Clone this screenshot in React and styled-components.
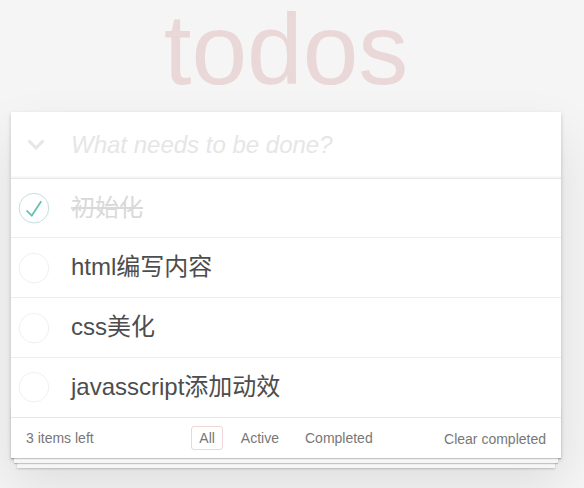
import React from "react";
import styled, { createGlobalStyle } from "styled-components";

const GlobalStyle = createGlobalStyle`
  body {
    margin: 0;
    background: #f5f5f5;
    font-family: "Liberation Sans", "Noto Sans CJK SC", Arial, sans-serif;
    color: #4d4d4d;
  }
`;

const Page = styled.div`
  width: 550px;
  margin: 0 0 0 11px;
  padding-bottom: 40px;
`;

const Title = styled.h1`
  margin: 0;
  height: 112px;
  font-size: 100px;
  line-height: 99px;
  font-weight: 100;
  text-align: center;
  color: rgba(175, 47, 47, 0.15);
`;

const Card = styled.section`
  position: relative;
  background: #fff;
  box-shadow: 0 2px 4px 0 rgba(0, 0, 0, 0.2), 0 25px 50px 0 rgba(0, 0, 0, 0.1);
`;

const Header = styled.header`
  display: flex;
  align-items: center;
  height: 65.6px;
  box-shadow: inset 0 -2px 1px rgba(0, 0, 0, 0.03);
`;

const ToggleAll = styled.button`
  width: 60px;
  height: 100%;
  padding: 0 0 0 16px;
  border: 0;
  background: none;
  display: flex;
  align-items: center;
  cursor: pointer;
`;

const NewTodo = styled.input`
  flex: 1;
  min-width: 0;
  box-sizing: border-box;
  height: 100%;
  padding: 0 16px 0 0;
  border: 0;
  outline: none;
  background: transparent;
  font-family: inherit;
  font-size: 24px;
  color: #4d4d4d;

  &::placeholder {
    font-style: italic;
    font-weight: 300;
    color: #e6e6e6;
  }
`;

const List = styled.ul`
  margin: 0;
  padding: 0;
  list-style: none;
  border-top: 1px solid #e6e6e6;
`;

const Item = styled.li`
  display: flex;
  align-items: center;
  border-bottom: 1px solid #ededed;

  &:last-child {
    border-bottom: none;
  }
`;

const Check = styled.span`
  width: 60px;
  height: 40px;
  display: flex;
  align-items: center;
`;

const Label = styled.label`
  flex: 1;
  padding: 15px 60px 15px 0;
  font-size: 24px;
  line-height: 1.2;
  word-break: break-all;
  color: ${(p) => (p.$done ? "#d9d9d9" : "#4d4d4d")};
  text-decoration: ${(p) => (p.$done ? "line-through" : "none")};
`;

const Footer = styled.footer`
  position: relative;
  display: grid;
  grid-template-columns: 1fr auto 1fr;
  grid-template-rows: 20px;
  align-items: center;
  height: 20px;
  padding: 10px 15px;
  border-top: 1px solid #e6e6e6;
  color: #777;
  font-size: 14px;

  &::before {
    content: "";
    position: absolute;
    left: 0;
    right: 0;
    bottom: 0;
    height: 50px;
    pointer-events: none;
    box-shadow: 0 1px 1px rgba(0, 0, 0, 0.2), 0 8px 0 -3px #f6f6f6,
      0 9px 1px -3px rgba(0, 0, 0, 0.2), 0 16px 0 -6px #f6f6f6,
      0 17px 2px -6px rgba(0, 0, 0, 0.2);
  }
`;

const Count = styled.span`
  line-height: 20px;
`;

const Filters = styled.ul`
  display: flex;
  align-items: center;
  gap: 4px;
  height: 20px;
  margin: 0;
  padding: 0;
  list-style: none;

  li {
    display: flex;
    align-items: center;
    height: 20px;
  }
`;

const FilterLink = styled.a`
  display: block;
  flex-shrink: 0;
  margin: 0 3px;
  padding: 3px 7px;
  line-height: 16px;
  color: inherit;
  text-decoration: none;
  border: 1px solid
    ${(p) => (p.$selected ? "rgba(175, 47, 47, 0.2)" : "transparent")};
  border-radius: 3px;
`;

const ClearButton = styled.button`
  justify-self: end;
  position: relative;
  top: 1px;
  padding: 0;
  border: 0;
  background: none;
  font: inherit;
  line-height: 20px;
  color: inherit;
  cursor: pointer;
`;

const Chevron = () => (
  <svg width="18" height="11" viewBox="0 0 18 11">
    <polyline
      points="1.5,1.5 9,9 16.5,1.5"
      fill="none"
      stroke="#e6e6e6"
      strokeWidth="3"
    />
  </svg>
);

const Toggle = ({ done }) => (
  <svg width="40" height="40" viewBox="-10 -18 100 135">
    <circle
      cx="50"
      cy="50"
      r="50"
      fill="none"
      stroke={done ? "#bddad5" : "#ededed"}
      strokeWidth="3"
    />
    {done && <path fill="#5dc2af" d="M72 25L42 71 27 56l-4 4 20 20 34-52z" />}
  </svg>
);

const todos = [
  { id: 1, title: "初始化", done: true },
  { id: 2, title: "html编写内容", done: false },
  { id: 3, title: "css美化", done: false },
  { id: 4, title: "javasscript添加动效", done: false },
];

const filters = ["All", "Active", "Completed"];

export default function App() {
  return (
    <>
      <GlobalStyle />
      <Page>
        <Title>todos</Title>
        <Card>
          <Header>
            <ToggleAll aria-label="Mark all as complete">
              <Chevron />
            </ToggleAll>
            <NewTodo placeholder="What needs to be done?" />
          </Header>
          <List>
            {todos.map((todo) => (
              <Item key={todo.id}>
                <Check>
                  <Toggle done={todo.done} />
                </Check>
                <Label $done={todo.done}>{todo.title}</Label>
              </Item>
            ))}
          </List>
          <Footer>
            <Count>3 items left</Count>
            <Filters>
              {filters.map((f) => (
                <li key={f}>
                  <FilterLink href="#" $selected={f === "All"}>
                    {f}
                  </FilterLink>
                </li>
              ))}
            </Filters>
            <ClearButton>Clear completed</ClearButton>
          </Footer>
        </Card>
      </Page>
    </>
  );
}
